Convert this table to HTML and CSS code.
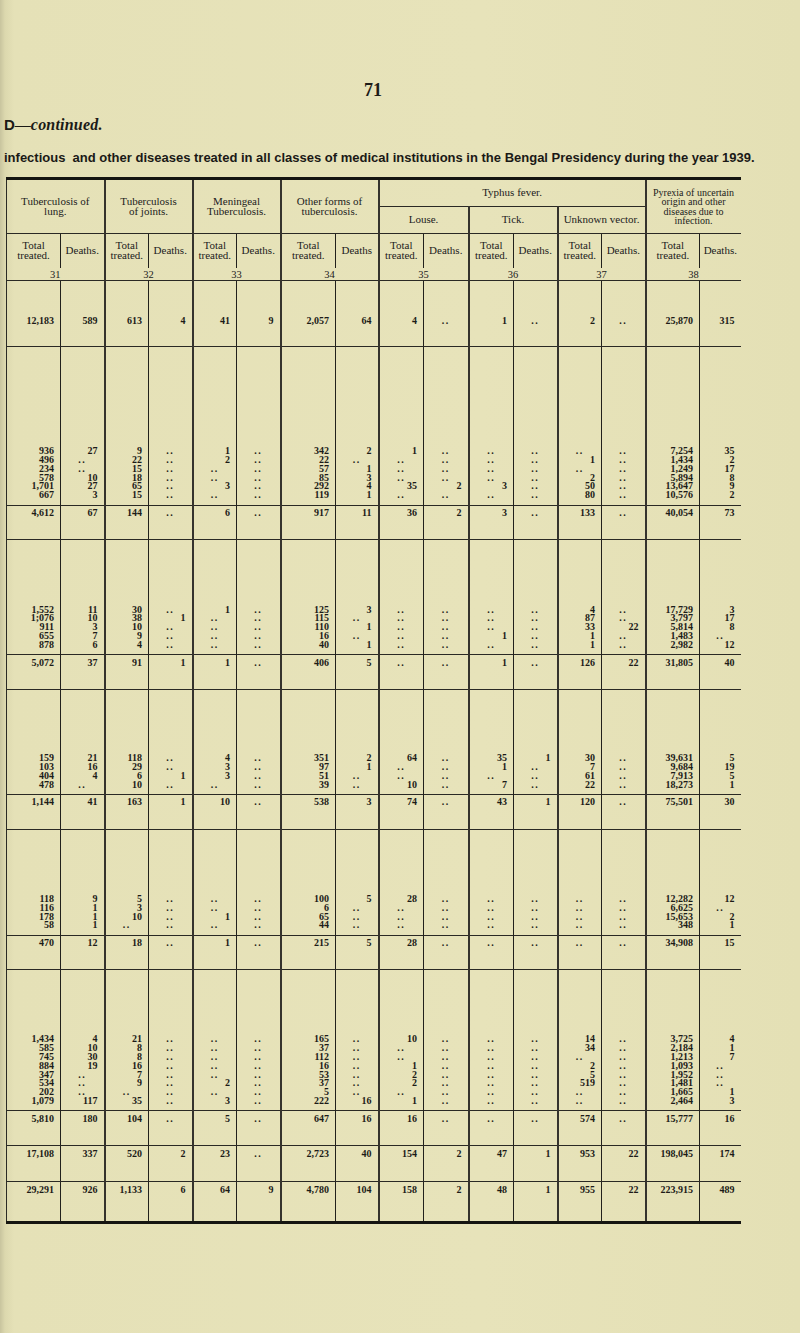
FILE: index.html
```
<!DOCTYPE html>
<html lang="en">
<head>
<meta charset="utf-8">
<title>Table D continued</title>
<link rel="stylesheet" href="styles.css">
</head>
<body>
<div class="page">
<div class="pnum">71</div>
<div class="cont"><b>D</b>—<i>continued.</i></div>
<div class="title">infectious&nbsp; and other diseases treated in all classes of medical institutions in the Bengal Presidency during the year 1939.</div>
<table class="t">
<colgroup><col class="w54"><col class="w44"><col class="w44"><col class="w44"><col class="w44"><col class="w44"><col class="w55"><col class="w43"><col class="w45"><col class="w45"><col class="w45"><col class="w44"><col class="w44"><col class="w44"><col class="w54"><col class="w41"></colgroup>
<thead>
<tr class="h1"><th colspan="2" rowspan="2" class="first">Tuberculosis of<br>lung.</th><th colspan="2" rowspan="2">Tuberculosis<br>of joints.</th><th colspan="2" rowspan="2">Meningeal<br>Tuberculosis.</th><th colspan="2" rowspan="2">Other forms of<br>tuberculosis.</th><th colspan="6">Typhus fever.</th><th colspan="2" rowspan="2" class="pyr">Pyrexia of uncertain<br>origin and other<br>diseases due to<br>infection.</th></tr>
<tr class="h2"><th colspan="2">Louse.</th><th colspan="2">Tick.</th><th colspan="2">Unknown vector.</th></tr>
<tr class="h3"><th class="first">Total<br>treated.</th><th class="in">Deaths.</th><th>Total<br>treated.</th><th class="in">Deaths.</th><th>Total<br>treated.</th><th class="in">Deaths.</th><th>Total<br>treated.</th><th class="in">Deaths</th><th>Total<br>treated.</th><th class="in">Deaths.</th><th>Total<br>treated.</th><th class="in">Deaths.</th><th>Total<br>treated.</th><th class="in">Deaths.</th><th>Total<br>treated.</th><th class="in">Deaths.</th></tr>
<tr class="h4"><th colspan="2" class="first">31</th><th colspan="2">32</th><th colspan="2">33</th><th colspan="2">34</th><th colspan="2">35</th><th colspan="2">36</th><th colspan="2">37</th><th colspan="2">38</th></tr>
</thead>
<tbody>
<tr class="ra"><td>12,183<td>589<td>613<td>4<td>41<td>9<td>2,057<td>64<td>4<td class=d>..<td>1<td class=d>..<td>2<td class=d>..<td>25,870<td>315
<tr class="fb"><td>936<td>27<td>9<td class=d>..<td>1<td class=d>..<td>342<td>2<td>1<td class=d>..<td class=d>..<td class=d>..<td class=d>..<td class=d>..<td>7,254<td>35
<tr><td>496<td class=d>..<td>22<td class=d>..<td>2<td class=d>..<td>22<td class=d>..<td class=d>..<td class=d>..<td class=d>..<td class=d>..<td>1<td class=d>..<td>1,434<td>2
<tr><td>234<td class=d>..<td>15<td class=d>..<td class=d>..<td class=d>..<td>57<td>1<td class=d>..<td class=d>..<td class=d>..<td class=d>..<td class=d>..<td class=d>..<td>1,249<td>17
<tr><td>578<td>10<td>18<td class=d>..<td class=d>..<td class=d>..<td>85<td>3<td class=d>..<td class=d>..<td class=d>..<td class=d>..<td>2<td class=d>..<td>5,894<td>8
<tr><td>1,701<td>27<td>65<td class=d>..<td>3<td class=d>..<td>292<td>4<td>35<td>2<td>3<td class=d>..<td>50<td class=d>..<td>13,647<td>9
<tr class="lst"><td>667<td>3<td>15<td class=d>..<td class=d>..<td class=d>..<td>119<td>1<td class=d>..<td class=d>..<td class=d>..<td class=d>..<td>80<td class=d>..<td>10,576<td>2
<tr class="tot"><td>4,612<td>67<td>144<td class=d>..<td>6<td class=d>..<td>917<td>11<td>36<td>2<td>3<td class=d>..<td>133<td class=d>..<td>40,054<td>73
<tr class="fc"><td>1,552<td>11<td>30<td class=d>..<td>1<td class=d>..<td>125<td>3<td class=d>..<td class=d>..<td class=d>..<td class=d>..<td>4<td class=d>..<td>17,729<td>3
<tr><td>1;076<td>10<td>38<td>1<td class=d>..<td class=d>..<td>115<td class=d>..<td class=d>..<td class=d>..<td class=d>..<td class=d>..<td>87<td class=d>..<td>3,797<td>17
<tr><td>911<td>3<td>10<td class=d>..<td class=d>..<td class=d>..<td>110<td>1<td class=d>..<td class=d>..<td class=d>..<td class=d>..<td>33<td>22<td>5,814<td>8
<tr><td>655<td>7<td>9<td class=d>..<td class=d>..<td class=d>..<td>16<td class=d>..<td class=d>..<td class=d>..<td>1<td class=d>..<td>1<td class=d>..<td>1,483<td class=d>..
<tr class="lst"><td>878<td>6<td>4<td class=d>..<td class=d>..<td class=d>..<td>40<td>1<td class=d>..<td class=d>..<td class=d>..<td class=d>..<td>1<td class=d>..<td>2,982<td>12
<tr class="tot"><td>5,072<td>37<td>91<td>1<td>1<td class=d>..<td>406<td>5<td class=d>..<td class=d>..<td>1<td class=d>..<td>126<td>22<td>31,805<td>40
<tr class="fd"><td>159<td>21<td>118<td class=d>..<td>4<td class=d>..<td>351<td>2<td>64<td class=d>..<td>35<td>1<td>30<td class=d>..<td>39,631<td>5
<tr><td>103<td>16<td>29<td class=d>..<td>3<td class=d>..<td>97<td>1<td class=d>..<td class=d>..<td>1<td class=d>..<td>7<td class=d>..<td>9,684<td>19
<tr><td>404<td>4<td>6<td>1<td>3<td class=d>..<td>51<td class=d>..<td class=d>..<td class=d>..<td class=d>..<td class=d>..<td>61<td class=d>..<td>7,913<td>5
<tr class="lst"><td>478<td class=d>..<td>10<td class=d>..<td class=d>..<td class=d>..<td>39<td class=d>..<td>10<td class=d>..<td>7<td class=d>..<td>22<td class=d>..<td>18,273<td>1
<tr class="tot"><td>1,144<td>41<td>163<td>1<td>10<td class=d>..<td>538<td>3<td>74<td class=d>..<td>43<td>1<td>120<td class=d>..<td>75,501<td>30
<tr class="fe"><td>118<td>9<td>5<td class=d>..<td class=d>..<td class=d>..<td>100<td>5<td>28<td class=d>..<td class=d>..<td class=d>..<td class=d>..<td class=d>..<td>12,282<td>12
<tr><td>116<td>1<td>3<td class=d>..<td class=d>..<td class=d>..<td>6<td class=d>..<td class=d>..<td class=d>..<td class=d>..<td class=d>..<td class=d>..<td class=d>..<td>6,625<td class=d>..
<tr><td>178<td>1<td>10<td class=d>..<td>1<td class=d>..<td>65<td class=d>..<td class=d>..<td class=d>..<td class=d>..<td class=d>..<td class=d>..<td class=d>..<td>15,653<td>2
<tr class="lst"><td>58<td>1<td class=d>..<td class=d>..<td class=d>..<td class=d>..<td>44<td class=d>..<td class=d>..<td class=d>..<td class=d>..<td class=d>..<td class=d>..<td class=d>..<td>348<td>1
<tr class="tot"><td>470<td>12<td>18<td class=d>..<td>1<td class=d>..<td>215<td>5<td>28<td class=d>..<td class=d>..<td class=d>..<td class=d>..<td class=d>..<td>34,908<td>15
<tr class="ff"><td>1,434<td>4<td>21<td class=d>..<td class=d>..<td class=d>..<td>165<td class=d>..<td>10<td class=d>..<td class=d>..<td class=d>..<td>14<td class=d>..<td>3,725<td>4
<tr><td>585<td>10<td>8<td class=d>..<td class=d>..<td class=d>..<td>37<td class=d>..<td class=d>..<td class=d>..<td class=d>..<td class=d>..<td>34<td class=d>..<td>2,184<td>1
<tr><td>745<td>30<td>8<td class=d>..<td class=d>..<td class=d>..<td>112<td class=d>..<td class=d>..<td class=d>..<td class=d>..<td class=d>..<td class=d>..<td class=d>..<td>1,213<td>7
<tr><td>884<td>19<td>16<td class=d>..<td class=d>..<td class=d>..<td>16<td class=d>..<td>1<td class=d>..<td class=d>..<td class=d>..<td>2<td class=d>..<td>1,093<td class=d>..
<tr><td>347<td class=d>..<td>7<td class=d>..<td class=d>..<td class=d>..<td>53<td class=d>..<td>2<td class=d>..<td class=d>..<td class=d>..<td>5<td class=d>..<td>1,952<td class=d>..
<tr><td>534<td class=d>..<td>9<td class=d>..<td>2<td class=d>..<td>37<td class=d>..<td>2<td class=d>..<td class=d>..<td class=d>..<td>519<td class=d>..<td>1,481<td class=d>..
<tr><td>202<td class=d>..<td class=d>..<td class=d>..<td class=d>..<td class=d>..<td>5<td class=d>..<td class=d>..<td class=d>..<td class=d>..<td class=d>..<td class=d>..<td class=d>..<td>1,665<td>1
<tr class="lst"><td>1,079<td>117<td>35<td class=d>..<td>3<td class=d>..<td>222<td>16<td>1<td class=d>..<td class=d>..<td class=d>..<td class=d>..<td class=d>..<td>2,464<td>3
<tr class="tot"><td>5,810<td>180<td>104<td class=d>..<td>5<td class=d>..<td>647<td>16<td>16<td class=d>..<td class=d>..<td class=d>..<td>574<td class=d>..<td>15,777<td>16
<tr class="g"><td>17,108<td>337<td>520<td>2<td>23<td class=d>..<td>2,723<td>40<td>154<td>2<td>47<td>1<td>953<td>22<td>198,045<td>174
<tr class="h"><td>29,291<td>926<td>1,133<td>6<td>64<td>9<td>4,780<td>104<td>158<td>2<td>48<td>1<td>955<td>22<td>223,915<td>489
</tbody>
</table>
</div>
</body>
</html>
```

FILE: styles.css
```
html, body { margin: 0; padding: 0; }
body {
  background: #e5e1b7;
  color: #1c1b17;
  font-family: "Liberation Serif", "DejaVu Serif", serif;
}
.page {
  position: relative;
  width: 800px;
  height: 1333px;
  overflow: hidden;
  background: linear-gradient(to right, #c8c49e 0px, #dcd8ae 5px, #e5e1b7 14px, #e7e3ba 60%, #e4e0b5 100%);
}
.pnum {
  width: 734px;
  margin: 80px 0 0 6px;
  text-align: center;
  font-weight: bold;
  font-size: 18px;
  line-height: 20px;
}
.cont {
  margin: 16px 0 0 4px;
  font-family: "Liberation Serif", serif;
  font-size: 16px;
  line-height: 18px;
  color: #1b1a16;
}
.cont b {
  font-family: "Liberation Sans", Arial, sans-serif;
  font-size: 15px;
}
.cont i {
  font-weight: bold;
  letter-spacing: 0.2px;
}
.title {
  margin: 17px 0 0 4px;
  font-family: "Liberation Sans", Arial, sans-serif;
  font-weight: bold;
  font-size: 13px;
  line-height: 14px;
  letter-spacing: 0;
  white-space: nowrap;
  color: #1a1916;
}
.t {
  margin: 12px 0 0 6px;
  width: 734px;
  border-collapse: collapse;
  table-layout: fixed;
}
.w54 { width: 54px; }
.w55 { width: 55px; }
.w44 { width: 44px; }
.w43 { width: 43px; }
.w45 { width: 45px; }
.w41 { width: 41px; }
th {
  font-weight: normal;
  font-size: 11px;
  line-height: 9.5px;
  text-align: center;
  padding: 0;
  border-left: 2px solid #35332d;
  border-bottom: 1px solid #2a2924;
  color: #22211c;
}
th.first { border-left: 1px solid #2a2924; }
.h1 { height: 28px; }
.h1 th { border-top: 3px solid #151511; }
.h2 { height: 27px; }
.h2 th { border-top: 1px solid #2a2924; }
.h3 { height: 34px; }
.h3 th { border-bottom: none; }
.h3 th.in { border-left: 1px solid #22211c; }
.h4 { height: 13px; }
.h4 th { font-size: 10.5px; line-height: 10px; vertical-align: bottom; }
th.pyr { font-size: 10px; line-height: 9.2px; }
td {
  font-size: 10px;
  font-weight: bold;
  line-height: 8.8px;
  height: 8.8px;
  padding: 0 6px 0 0;
  text-align: right;
  white-space: nowrap;
}
td:nth-child(odd) { border-left: 2px solid #35332d; }
td:nth-child(even) { border-left: 1px solid #22211c; }
td:first-child { border-left: 1px solid #2a2924; }
td.d { text-align: center; padding: 0; letter-spacing: 1.5px; }
.ra td { padding-top: 35.5px; padding-bottom: 21px; border-bottom: 1px solid #2a2924; }
.fb td { padding-top: 100px; }
.fc td { padding-top: 65.5px; }
.fd td { padding-top: 64.5px; }
.fe td { padding-top: 65.5px; }
.ff td { padding-top: 65px; }
.lst td { padding-bottom: 4.5px; }
.tot td {
  border-top: 1px solid #2a2924;
  border-bottom: 1px solid #2a2924;
  padding-top: 3.5px;
  padding-bottom: 21.3px;
  vertical-align: top;
}
.g td { padding-top: 4.6px; padding-bottom: 21.5px; border-bottom: 1px solid #2a2924; }
.h td { padding-top: 4.6px; padding-bottom: 26px; border-bottom: 3px solid #151511; }
```
